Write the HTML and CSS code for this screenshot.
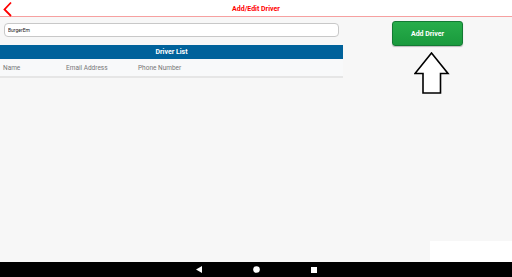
FILE: index.html
```html
<!DOCTYPE html>
<html>

<head>
    <meta charset="UTF-8">
    <title>Add/Edit Driver</title>
    <link rel="stylesheet" href="styles.css">
</head>

<body>
    <div class="screen">
        <div class="topbar">
            <svg class="back" width="12" height="16" viewBox="0 0 12 16">
                <path d="M10 1.5 L3.5 8.5 L10 15" fill="none" stroke="#ff0000" stroke-width="1.8"/>
            </svg>
            <div class="title">Add/Edit Driver</div>
        </div>

        <div class="content">
            <div class="left">
                <input type="text" class="search" value="BurgerEm">
                <div class="list-head">Driver List</div>
                <div class="cols">
                    <span class="col-name">Name</span>
                    <span class="col-email">Email Address</span>
                    <span class="col-phone">Phone Number</span>
                </div>
            </div>

            <div class="right">
                <button class="add-btn">Add Driver</button>
                <svg class="arrow" width="36" height="44" viewBox="0 0 36 44">
                    <path d="M17.5 1 L34 21.5 L26.5 21.5 L26.5 41 L9 41 L9 21.5 L1 21.5 Z" fill="#fff" stroke="#000" stroke-width="1.6" stroke-linejoin="miter"/>
                </svg>
            </div>
        </div>

        <div class="toast"></div>
    </div>

    <div class="navbar">
        <svg width="6" height="7" viewBox="0 0 6 7"><path d="M0 3.5 L6 0 L6 7 Z" fill="#fff"/></svg>
        <svg width="7" height="7" viewBox="0 0 7 7"><circle cx="3.5" cy="3.5" r="3.3" fill="#fff"/></svg>
        <svg width="6" height="6" viewBox="0 0 6 6"><rect width="6" height="6" fill="#fff"/></svg>
    </div>
</body>

</html>
```

FILE: styles.css
```css
html, body {
    margin: 0;
    padding: 0;
}

body {
    width: 512px;
    height: 277px;
    overflow: hidden;
    font-family: Roboto, "Liberation Sans", sans-serif;
    background-color: #f7f7f7;
    display: flex;
    flex-direction: column;
}

.screen {
    flex: 1;
    display: flex;
    flex-direction: column;
    position: relative;
}

.topbar {
    height: 16px;
    background-color: #ffffff;
    border-bottom: 1px solid #f6a0a0;
    display: flex;
    align-items: center;
    position: relative;
}

.back {
    position: absolute;
    left: 1px;
    top: 1px;
}

.title {
    flex: 1;
    text-align: center;
    color: #ff0000;
    font-size: 7px;
    font-weight: bold;
    margin-top: 1px;
}

.content {
    display: flex;
    flex: 1;
}

.left {
    width: 343px;
    padding-top: 6px;
}

.search {
    display: block;
    box-sizing: border-box;
    width: 335px;
    height: 14px;
    margin-left: 4px;
    padding: 0 3px;
    border: 1px solid #c8c8c8;
    border-radius: 4px;
    background-color: #ffffff;
    font-family: Roboto, "Liberation Sans", sans-serif;
    font-size: 5px;
    color: #222;
    outline: none;
}

.list-head {
    margin-top: 8px;
    height: 14px;
    line-height: 14px;
    background-color: #00629b;
    color: #ffffff;
    text-align: center;
    font-size: 7px;
    font-weight: bold;
}

.cols {
    height: 17px;
    display: flex;
    align-items: center;
    background-color: #f8f9fa;
    border-bottom: 2px solid #e6e6e6;
    font-size: 6.5px;
    color: #777777;
}

.col-name {
    width: 63px;
    padding-left: 3px;
}

.col-email {
    width: 72px;
}

.right {
    flex: 1;
    display: flex;
    flex-direction: column;
    align-items: center;
    padding-top: 4px;
}

.add-btn {
    width: 71px;
    height: 25px;
    border: 1px solid #137a33;
    border-radius: 3px;
    background: linear-gradient(#27ad4a, #1a9a3d);
    color: #ffffff;
    font-family: Roboto, "Liberation Sans", sans-serif;
    font-size: 7px;
    font-weight: bold;
    box-shadow: 0 1px 1px rgba(0, 0, 0, 0.25);
}

.arrow {
    margin-top: 6px;
    margin-left: 9px;
}

.toast {
    position: absolute;
    right: 0;
    bottom: 0;
    width: 82px;
    height: 21px;
    background-color: #ffffff;
}

.navbar {
    height: 15px;
    background-color: #000000;
    display: flex;
    align-items: center;
    justify-content: center;
    gap: 51px;
}
```
